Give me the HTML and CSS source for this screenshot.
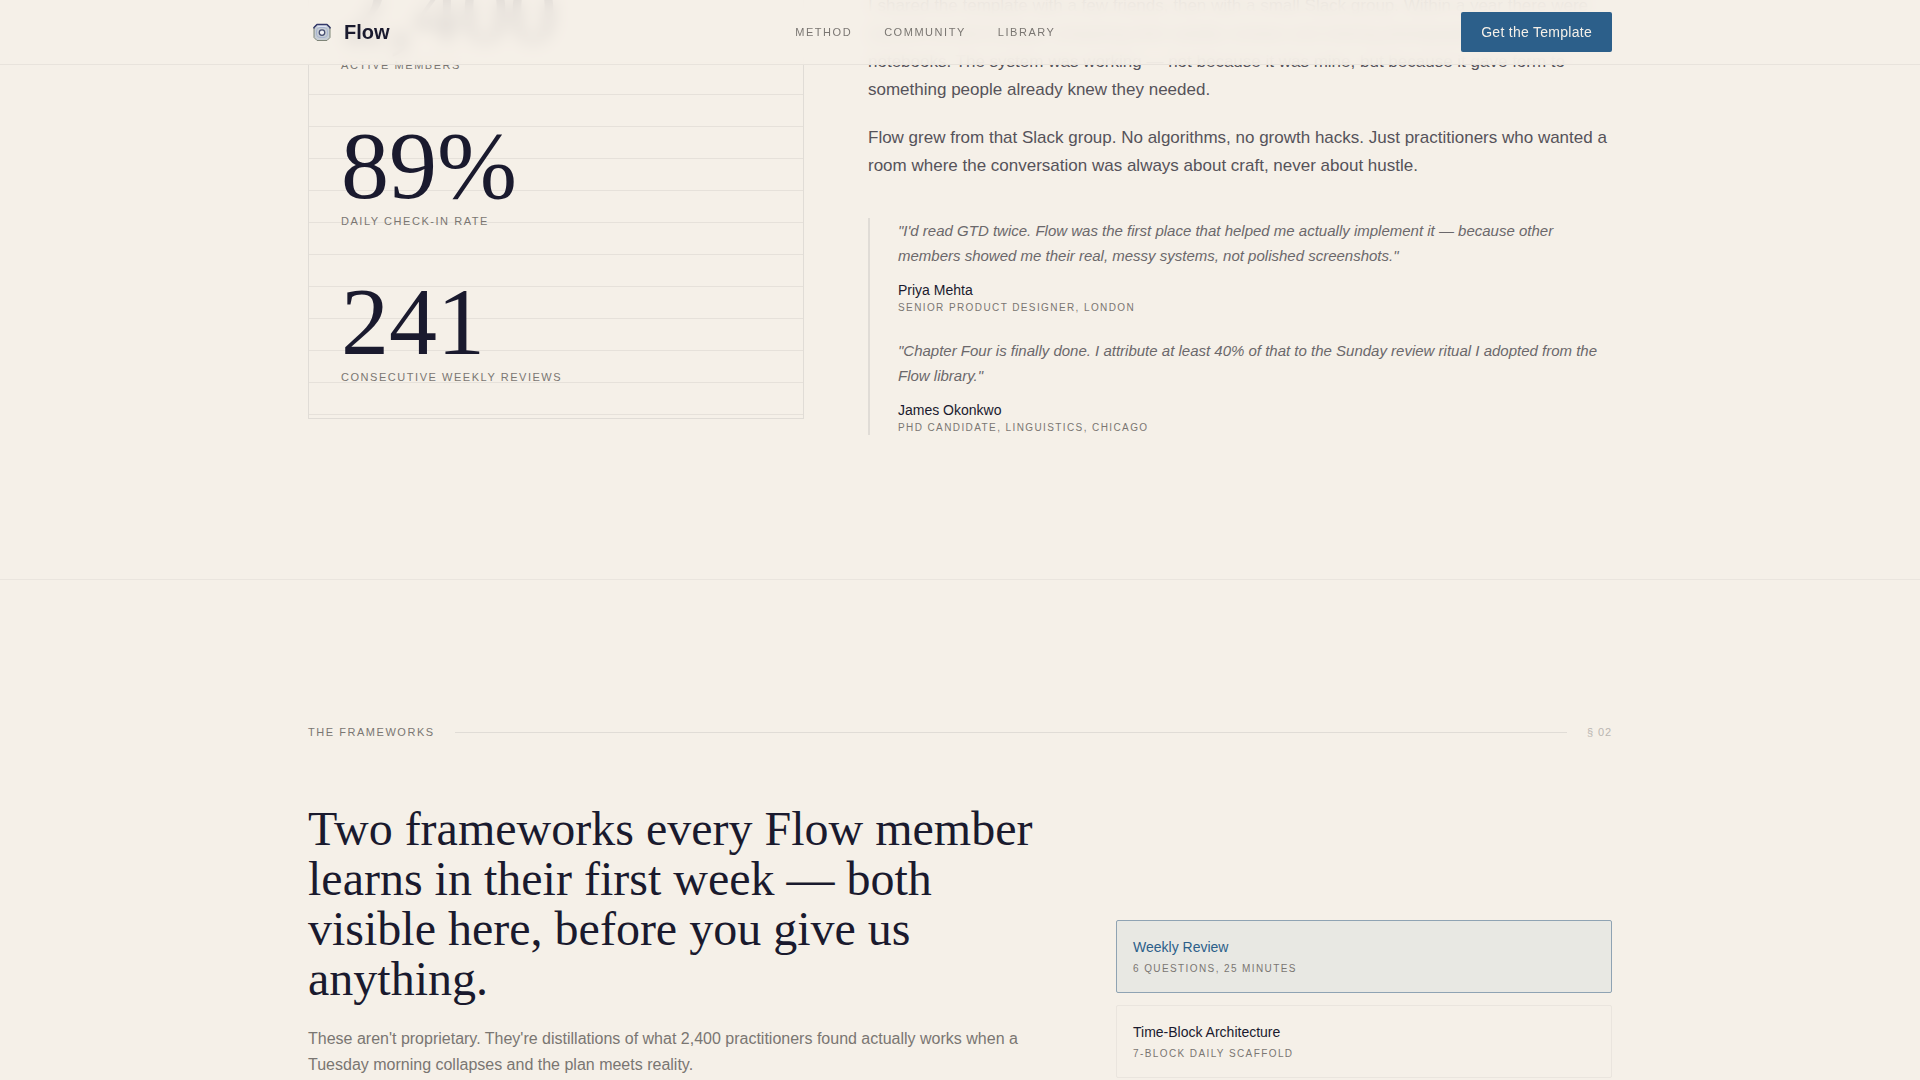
FILE: index.html
```html
<!DOCTYPE html>
<html lang="en">
<head>
	<meta charset="UTF-8">
	<meta name="viewport" content="width=device-width, initial-scale=1">
	<title>Flow</title>
	<link rel="stylesheet" href="styles.css">
</head>
<body>

	<header class="nav">
		<div class="container nav-inner">
			<a href="#" class="logo">
				<svg class="logo-mark" viewBox="0 0 28 28" aria-hidden="true">
					<path d="M9 6.5h10l3 3v10l-3 3H9l-3-3v-10z" fill="#c6cdd4" stroke="#7f8578" stroke-width="1" stroke-linejoin="round"/>
					<path d="M6 10.500V9.500l3-3h10l3 3v1" fill="none" stroke="#33386a" stroke-width="1.500" stroke-linejoin="round"/>
					<path d="M9.500 8.500h9" stroke="#dfe5f6" stroke-width="1.500"/>
					<rect x="8.500" y="9.500" width="11" height="10" rx="3.500" fill="none" stroke="#a9b4d0"/>
					<circle cx="14" cy="14.500" r="2.750" fill="#f2f3f6" stroke="#464e70" stroke-width="1.250"/>
				</svg>
				<span>Flow</span>
			</a>
			<nav class="nav-links">
				<a href="#method">Method</a>
				<a href="#community">Community</a>
				<a href="#library">Library</a>
			</nav>
			<a href="#template" class="btn">Get the Template</a>
		</div>
	</header>

	<main>
		<section class="section community" id="community">
			<div class="container community-grid">
				<div class="ledger">
					<div class="stat">
						<div class="stat-num">2,400</div>
						<div class="stat-label">Active members</div>
					</div>
					<div class="stat">
						<div class="stat-num">89%</div>
						<div class="stat-label">Daily check-in rate</div>
					</div>
					<div class="stat">
						<div class="stat-num">241</div>
						<div class="stat-label">Consecutive weekly reviews</div>
					</div>
				</div>

				<div class="story">
					<p>I shared the template with a few friends, then with a small Slack group. Within a year there were several hundred people comparing their weekly reviews and sharing photographs of their notebooks. The system was working — not because it was mine, but because it gave form to something people already knew they needed.</p>
					<p>Flow grew from that Slack group. No algorithms, no growth hacks. Just practitioners who wanted a room where the conversation was always about craft, never about hustle.</p>

					<div class="quotes">
						<figure class="quote">
							<blockquote>"I'd read GTD twice. Flow was the first place that helped me actually implement it — because other members showed me their real, messy systems, not polished screenshots."</blockquote>
							<figcaption>
								<div class="quote-name">Priya Mehta</div>
								<div class="meta">Senior Product Designer, London</div>
							</figcaption>
						</figure>
						<figure class="quote">
							<blockquote>"Chapter Four is finally done. I attribute at least 40% of that to the Sunday review ritual I adopted from the Flow library."</blockquote>
							<figcaption>
								<div class="quote-name">James Okonkwo</div>
								<div class="meta">PhD Candidate, Linguistics, Chicago</div>
							</figcaption>
						</figure>
					</div>
				</div>
			</div>
		</section>

		<section class="section frameworks" id="method">
			<div class="container">
				<div class="section-head">
					<span class="section-label">The Frameworks</span>
					<span class="rule"></span>
					<span class="section-num">§ 02</span>
				</div>
				<div class="frameworks-grid">
					<div>
						<h2>Two frameworks every Flow member learns in their first week — both visible here, before you give us anything.</h2>
						<p class="lead">These aren't proprietary. They're distillations of what 2,400 practitioners found actually works when a Tuesday morning collapses and the plan meets reality.</p>
					</div>
					<div class="tabs">
						<button type="button" class="tab active">
							<span class="tab-title">Weekly Review</span>
							<span class="meta">6 questions, 25 minutes</span>
						</button>
						<button type="button" class="tab">
							<span class="tab-title">Time-Block Architecture</span>
							<span class="meta">7-block daily scaffold</span>
						</button>
					</div>
				</div>
			</div>
		</section>
	</main>

</body>
</html>
```
FILE: styles.css
```css
:root {
	--paper: #f5f0e8;
	--ink: #1a1a2e;
	--blue: #2c5f8a;
	--muted: #7a7672;
	--line: #e0dcd6;
	--line-soft: #eae5de;
}

* {
	box-sizing: border-box;
	margin: 0;
	padding: 0;
}

body {
	min-height: 100vh;
	overflow: hidden;
	background: var(--paper);
	color: var(--ink);
	font-family: "Liberation Sans", Arial, sans-serif;
	font-size: 16px;
}

a {
	color: inherit;
	text-decoration: none;
}

.container {
	max-width: 1400px;
	margin: 0 auto;
	padding: 0 48px;
}

/* nav */
.nav {
	position: fixed;
	top: 0;
	left: 0;
	right: 0;
	z-index: 10;
	background: rgba(245,240,232,0.9);
	backdrop-filter: blur(8px);
	border-bottom: 1px solid #e8e3dc;
}
.nav-inner {
	display: flex;
	align-items: center;
	justify-content: space-between;
	height: 64px;
}
.logo {
	display: flex;
	align-items: center;
	gap: 8px;
	font-size: 20px;
	font-weight: bold;
}
.logo-mark {
	width: 28px;
	height: 28px;
}
.nav-links {
	display: flex;
	gap: 32px;
	font-size: 11px;
	letter-spacing: 0.14em;
	text-transform: uppercase;
	color: var(--muted);
}
.btn {
	padding: 0 20px;
	border-radius: 2px;
	background: var(--blue);
	color: var(--paper);
	font-size: 14px;
	line-height: 40px;
	letter-spacing: 0.02em;
}

/* community */
.section {
	padding: 144px 0;
}
.community {
	margin-top: -66px;
	padding-top: 0;
	border-bottom: 1px solid var(--line-soft);
}
.community-grid {
	display: grid;
	grid-template-columns: 2fr 3fr;
	gap: 64px;
	align-items: start;
}
.ledger {
	display: flex;
	flex-direction: column;
	gap: 49px;
	padding: 32px;
	border: 1px solid var(--line);
	background-image: repeating-linear-gradient(transparent 0, transparent 31px, #e6e1da 31px, #e6e1da 32px);
}
.stat-num {
	font-family: "Liberation Serif", "Times New Roman", serif;
	font-size: 96px;
	line-height: 86px;
}
.stat-label {
	margin-top: 3px;
	font-size: 11px;
	line-height: 18px;
	letter-spacing: 0.14em;
	text-transform: uppercase;
	color: var(--muted);
}
.story {
	padding-top: 58px;
}
.story p {
	margin-bottom: 20px;
	font-size: 17px;
	line-height: 28px;
	color: #55535a;
}
.quotes {
	display: flex;
	flex-direction: column;
	gap: 23px;
	margin-top: 38px;
	padding-left: 28px;
	border-left: 2px solid var(--line);
}
.quote blockquote {
	margin-bottom: 13px;
	font-size: 15px;
	font-style: italic;
	line-height: 25px;
	color: #6b686b;
}
.quote-name {
	font-size: 14px;
	line-height: 19px;
}
.meta {
	display: block;
	font-size: 10px;
	line-height: 15px;
	letter-spacing: 0.14em;
	text-transform: uppercase;
	color: var(--muted);
}

/* frameworks */
.frameworks {
	padding-bottom: 0;
}
.section-head {
	display: flex;
	align-items: center;
	gap: 20px;
	margin-bottom: 64px;
	font-size: 11px;
	line-height: 16px;
	letter-spacing: 0.14em;
	text-transform: uppercase;
	color: var(--muted);
}
.rule {
	flex: 1;
	height: 1px;
	background: var(--line);
}
.section-num {
	letter-spacing: 0.08em;
	color: #bab6b2;
}
.frameworks-grid {
	display: grid;
	grid-template-columns: 3fr 2fr;
	gap: 64px;
	align-items: end;
}
h2 {
	margin-bottom: 22px;
	font-family: "Liberation Serif", "Times New Roman", serif;
	font-size: 48px;
	font-weight: normal;
	line-height: 50px;
}
.lead {
	line-height: 26px;
	color: var(--muted);
}
.tabs {
	display: flex;
	flex-direction: column;
	gap: 12px;
}
.tab {
	padding: 16px;
	border: 1px solid var(--line-soft);
	border-radius: 2px;
	background: none;
	color: var(--ink);
	font-family: inherit;
	text-align: left;
}
.tab-title {
	display: block;
	margin-bottom: 4px;
	font-size: 14px;
	line-height: 20px;
}
.tab.active {
	border-color: #8fa3b3;
	background: #e8e8e3;
}
.tab.active .tab-title {
	color: var(--blue);
}
```
